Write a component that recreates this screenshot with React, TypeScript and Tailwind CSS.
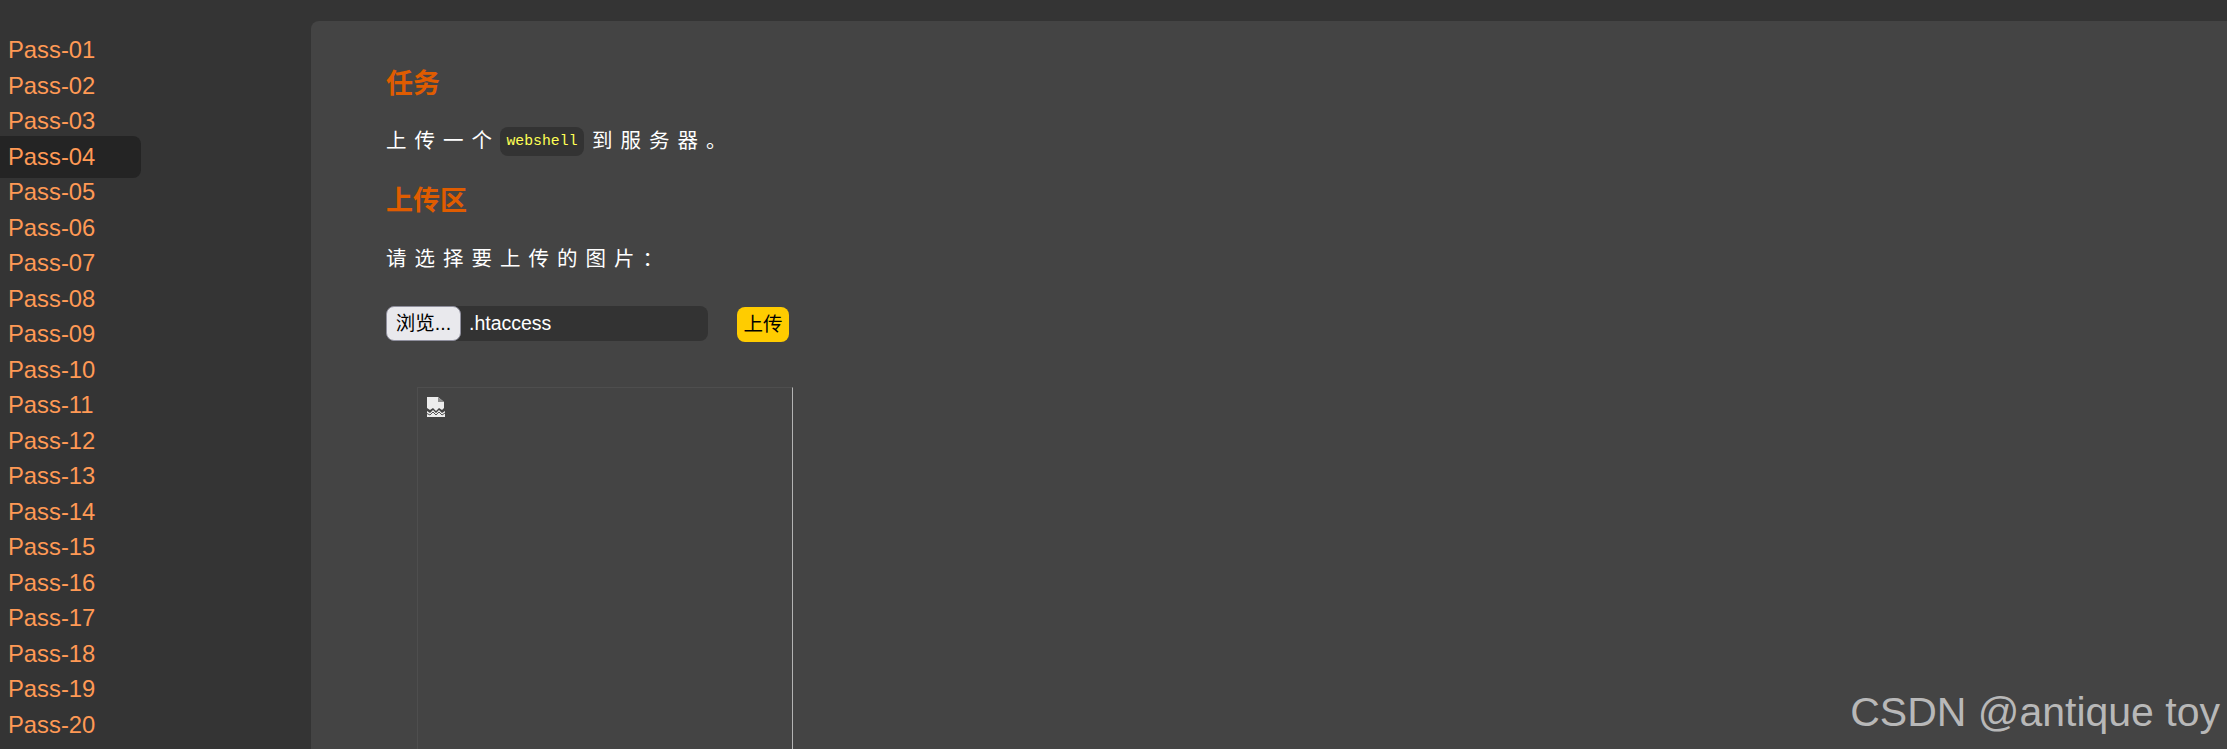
const passes = Array.from({ length: 20 }, (_, i) => `Pass-${String(i + 1).padStart(2, "0")}`);

const cjk = "font-['Liberation_Sans','Noto_Sans_CJK_SC',sans-serif]";

function BrokenImage() {
  return (
    <svg width="20" height="21" viewBox="0 0 20 21" className="block">
      <path d="M1 1h11l6 5v6l-2 2-3-2-3 3-3-3-3 2-3-2z" fill="#ededed" />
      <path d="M12 1v5h6z" fill="#8c8c8c" />
      <path d="M1 15l3 2 3-3 3 3 3-3 3 3 3-2v6H1z" fill="#ededed" />
      <path d="M1 17.5l3 1.5 3-3 3 3 3-3 3 3 3-2" fill="none" stroke="#555555" strokeWidth="1" />
    </svg>
  );
}

export default function App() {
  return (
    <div className={`relative flex h-[749px] w-[2227px] overflow-hidden bg-[#343434] ${cjk}`}>
      {/* Sidebar */}
      <nav className="w-[311px] shrink-0 pt-[32.5px]">
        {passes.map((p) => (
          <div
            key={p}
            className={`flex w-[141px] items-center rounded-r-lg pl-[8px] text-[23.8px] text-[#ff9955] ${
              p === "Pass-04" ? "-my-[3px] h-[41.5px] bg-[#242424]" : "h-[35.5px]"
            }`}
          >
            {p}
          </div>
        ))}
      </nav>

      {/* Main */}
      <main className="mt-[21px] flex-1 rounded-tl-lg bg-[#444444] pl-[75px] pt-[45px]">
        <h2 className="text-[27px] font-bold leading-[36px] text-[#e05c00]">任务</h2>
        <p className="mt-[25px] flex h-[29px] items-center text-[20.5px] tracking-[8px] text-white">
          上传一个
          <code className="mr-[8px] flex h-[29px] w-[84px] items-center justify-center rounded-lg bg-[#333333] font-['Liberation_Mono',monospace] text-[14.8px] tracking-normal text-[#ffff55]">
            webshell
          </code>
          到服务器。
        </p>
        <h2 className="mt-[27px] text-[27px] font-bold leading-[36px] text-[#e05c00]">上传区</h2>
        <p className="mt-[25px] h-[29px] text-[20.5px] leading-[29px] tracking-[8px] text-white">请选择要上传的图片：</p>

        <div className="mt-[33px] flex items-start">
          <div className="flex h-[35px] w-[322px] items-center rounded-lg bg-[#333333]">
            <span className="flex h-[35px] w-[75px] items-center justify-center rounded-lg border border-[#8f8f9d] bg-[#e9e9ed] text-[19.5px] text-black">
              浏览...
            </span>
            <span className="ml-[8px] text-[19.5px] text-white">.htaccess</span>
          </div>
          <button className="ml-[29px] mt-[1px] flex h-[35px] w-[52px] items-center justify-center rounded-lg bg-[#ffcc00] text-[19.5px] text-black">
            上传
          </button>
        </div>

        {/* Broken preview image */}
        <div className="ml-[31px] mt-[45px] h-[400px] w-[376px] border-l border-r border-t border-[#4e4e4e] border-r-[#b4b4b4] pl-[8px] pt-[8px]">
          <BrokenImage />
        </div>
      </main>

      <div className="absolute bottom-[13px] right-[7px] font-['Liberation_Sans',sans-serif] text-[41px] leading-[48px] text-[#b8b8b8]">
        CSDN @antique toy
      </div>
    </div>
  );
}
